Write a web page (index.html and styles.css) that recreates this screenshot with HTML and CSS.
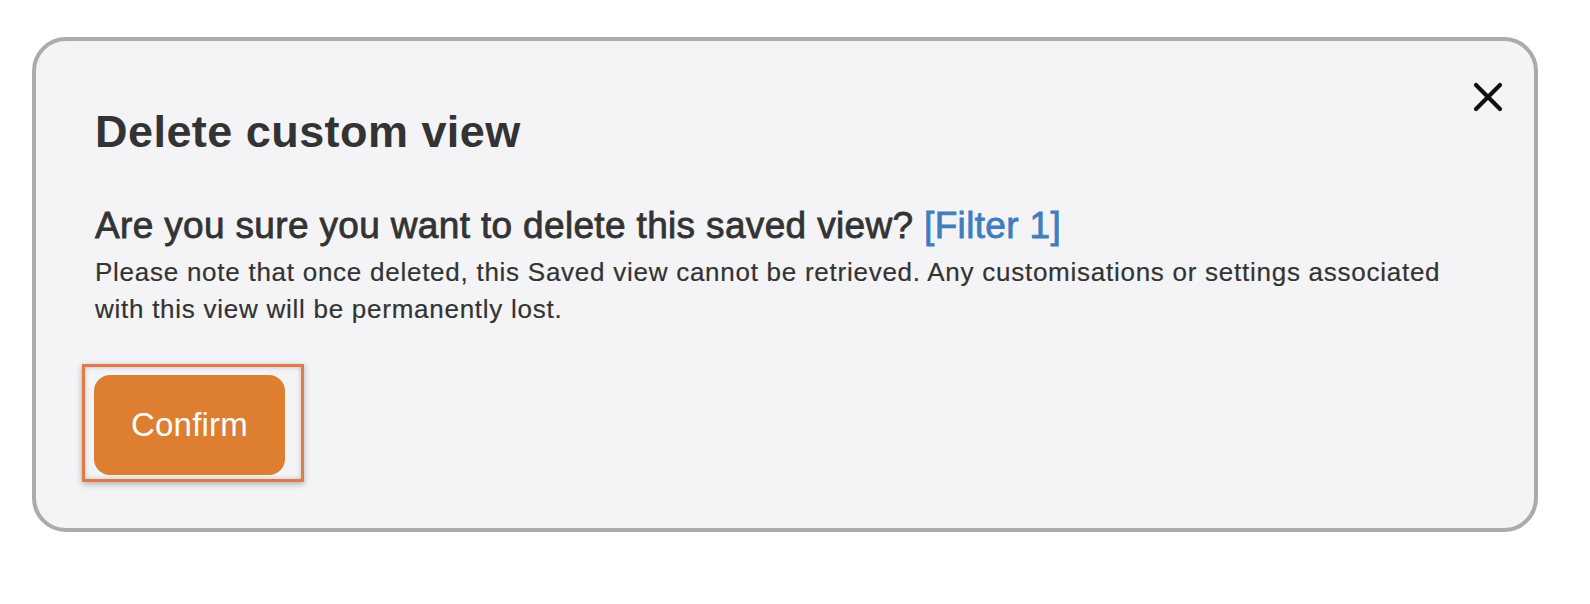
FILE: index.html
```html
<!DOCTYPE html>
<html lang="en">
<head>
<meta charset="utf-8">
<title>Delete custom view</title>
<link rel="stylesheet" href="styles.css">
</head>
<body>
<div class="dialog">
  <button class="close" aria-label="Close">
    <svg width="30" height="30" viewBox="0 0 30 30"><path d="M3 3 L27 27 M27 3 L3 27" stroke="#111" stroke-width="4.2" stroke-linecap="round" fill="none"/></svg>
  </button>
  <h1 class="title">Delete custom view</h1>
  <p class="question">Are you sure you want to delete this saved view? <span class="link">[Filter 1]</span></p>
  <p class="note">Please note that once deleted, this Saved view cannot be retrieved. Any customisations or settings associated with this view will be permanently lost.</p>
  <div class="highlight">
    <button class="confirm">Confirm</button>
  </div>
</div>
</body>
</html>
```

FILE: styles.css
```css
html, body {
  margin: 0;
  padding: 0;
  background: #ffffff;
}
body {
  font-family: "Liberation Sans", Arial, sans-serif;
  padding: 37px 0 0 32px;
}
.dialog {
  position: relative;
  box-sizing: border-box;
  width: 1506px;
  height: 495px;
  border: 4px solid #ababab;
  border-radius: 34px;
  background: #f4f4f6;
  padding: 66px 60px 0 59px;
}
.close {
  position: absolute;
  top: 41px;
  right: 31px;
  width: 30px;
  height: 30px;
  padding: 0;
  border: 0;
  background: transparent;
  display: flex;
}
.title {
  margin: 0;
  font-size: 45px;
  line-height: 50px;
  font-weight: bold;
  letter-spacing: 0.45px;
  color: #333333;
}
.question {
  margin: 47px 0 0 0;
  font-size: 37px;
  line-height: 44px;
  font-weight: normal;
  letter-spacing: 0.34px;
  color: #333333;
  -webkit-text-stroke: 0.8px #333333;
}
.link {
  color: #3f7dbd;
  -webkit-text-stroke: 0.8px #3f7dbd;
}
.note {
  margin: 6px 0 0 0;
  font-size: 26px;
  line-height: 37px;
  letter-spacing: 0.74px;
  color: #333333;
  -webkit-text-stroke: 0.2px #333333;
}
.highlight {
  display: inline-flex;
  margin: 36px 0 0 -13px;
  padding: 8px 16px 4px 9px;
  border: 3px solid #e27a48;
  box-shadow: 0 2px 6px rgba(0, 0, 0, 0.3), inset 0 0 5px rgba(0, 0, 0, 0.22);
}
.confirm {
  width: 191px;
  height: 100px;
  border: 0;
  border-radius: 16px;
  background: #de7e30;
  color: #ffffff;
  font-family: "Liberation Sans", Arial, sans-serif;
  font-size: 33px;
  letter-spacing: 0.2px;
  padding: 0;
}
```
